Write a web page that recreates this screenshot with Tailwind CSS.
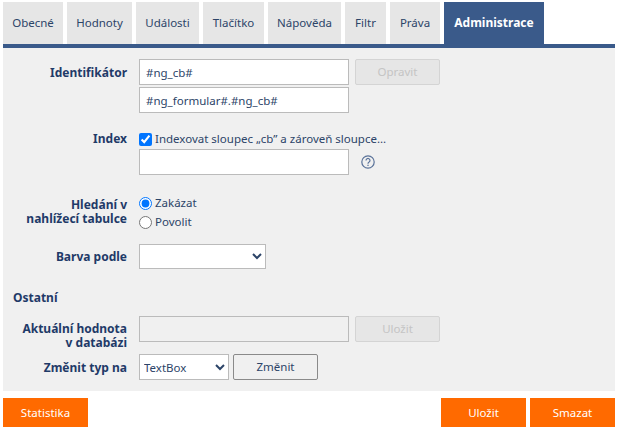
<!DOCTYPE html>
<html lang="cs">
  <head>
    <meta charset="UTF-8" />
    <title>Administrace</title>
    <script src="https://cdn.jsdelivr.net/npm/@tailwindcss/browser@4"></script>
  </head>
  <body class="w-[618px] h-[430px] overflow-hidden bg-white font-['Noto_Sans',sans-serif] text-[11.5px] leading-[18px] text-[#2c4468]">
    <!-- Tabs -->
    <nav class="flex gap-1 h-[42px] mt-[2px] mx-[3px]">
      <a class="w-[60px] flex items-center justify-center bg-[#e6e6e6]">Obecné</a>
      <a class="w-[65px] flex items-center justify-center bg-[#e6e6e6]">Hodnoty</a>
      <a class="w-[63px] flex items-center justify-center bg-[#e6e6e6]">Události</a>
      <a class="w-[61px] flex items-center justify-center bg-[#e6e6e6]">Tlačítko</a>
      <a class="w-[73px] flex items-center justify-center bg-[#e6e6e6]">Nápověda</a>
      <a class="w-[41px] flex items-center justify-center bg-[#e6e6e6]">Filtr</a>
      <a class="w-[50px] flex items-center justify-center bg-[#e6e6e6]">Práva</a>
      <a class="w-[100px] flex items-center justify-center bg-[#3a5a8a] text-white text-[12px] font-bold">Administrace</a>
    </nav>

    <!-- Form -->
    <section class="mx-[3px] h-[347px] border-t-4 border-[#3a5a8a] bg-[#f0f0f0] pt-[11px] pl-[10px]">
      <div class="flex">
        <label class="w-[114px] pt-[5px] text-right text-[12px] font-bold text-[#1f3a68]">Identifikátor</label>
        <div class="ml-[12px] flex flex-col gap-[2px]">
          <input value="#ng_cb#" class="w-[210px] h-[26px] px-[6px] bg-white border border-[#bbbbbb] text-[#2c4468]" />
          <input value="#ng_formular#.#ng_cb#" class="w-[210px] h-[26px] px-[6px] bg-white border border-[#bbbbbb] text-[#2c4468]" />
        </div>
        <button disabled class="ml-[6px] w-[85px] h-[26px] bg-[#e6e6e6] border border-[#d4d4d4] rounded-[2px] text-[#c4c4c4]">Opravit</button>
      </div>

      <div class="flex mt-[18px]">
        <label class="w-[114px] text-right text-[12px] font-bold leading-[16px] text-[#1f3a68]">Index</label>
        <div class="ml-[12px]">
          <label class="flex items-center h-[16px] gap-[3px]">
            <input type="checkbox" checked class="m-0 w-[13px] h-[13px]" />
            <span class="whitespace-nowrap">Indexovat sloupec „cb” a zároveň sloupce...</span>
          </label>
          <div class="flex items-center mt-[2px]">
            <input class="w-[210px] h-[26px] bg-white border border-[#bbbbbb]" />
            <svg class="ml-[12px]" width="14" height="14" viewBox="0 0 14 14" fill="none">
              <circle cx="7" cy="7" r="6.2" stroke="#5a7299" stroke-width="1.2" />
              <path d="M5 5.4a2 2 0 1 1 3.1 1.7c-.7.4-1.1.8-1.1 1.6" stroke="#5a7299" stroke-width="1.2" />
              <rect x="6.4" y="9.7" width="1.2" height="1.3" fill="#5a7299" />
            </svg>
          </div>
        </div>
      </div>

      <div class="flex mt-[20px]">
        <label class="w-[114px] text-right text-[12px] font-bold text-[#1f3a68] leading-[14px] pt-[3px]">Hledání v<br />nahlížecí tabulce</label>
        <div class="ml-[12px] flex flex-col gap-[3px]">
          <label class="flex items-center h-[16px] gap-[3px]"><input type="radio" name="hledani" checked class="m-0 w-[13px] h-[13px]" />Zakázat</label>
          <label class="flex items-center h-[16px] gap-[3px]"><input type="radio" name="hledani" class="m-0 w-[13px] h-[13px]" />Povolit</label>
        </div>
      </div>

      <div class="flex mt-[14px]">
        <label class="w-[114px] pt-[4px] text-right text-[12px] font-bold text-[#1f3a68]">Barva podle</label>
        <select class="ml-[12px] w-[127px] h-[25px] bg-white border border-[#bbbbbb]"><option></option></select>
      </div>

      <h3 class="mt-[20px] h-[18px] text-[12px] font-bold text-[#1f3a68]">Ostatní</h3>

      <div class="flex mt-[9px]">
        <label class="w-[114px] text-right text-[12px] font-bold text-[#1f3a68] leading-[14px] pt-[6px]">Aktuální hodnota<br />v databázi</label>
        <input disabled class="ml-[12px] w-[210px] h-[26px] bg-[#f0f0f0] border border-[#bbbbbb]" />
        <button disabled class="ml-[6px] w-[85px] h-[26px] bg-[#e6e6e6] border border-[#d4d4d4] rounded-[2px] text-[#c4c4c4]">Uložit</button>
      </div>

      <div class="flex mt-[4px]">
        <label class="w-[114px] pt-[5px] text-right text-[12px] font-bold text-[#1f3a68]">Změnit typ na</label>
        <select class="ml-[12px] w-[90px] h-[26px] bg-white border border-[#bbbbbb]"><option>TextBox</option></select>
        <button class="ml-[4px] w-[85px] h-[26px] bg-[#f0f0f0] border border-[#8a8a8a] rounded-[2px]">Změnit</button>
      </div>
    </section>

    <!-- Actions -->
    <footer class="flex gap-1 mx-[3px] mt-[7px]">
      <button class="w-[85px] h-[29px] bg-[#ff6a00] text-white">Statistika</button>
      <button class="w-[85px] h-[29px] ml-auto bg-[#ff6a00] text-white">Uložit</button>
      <button class="w-[85px] h-[29px] bg-[#ff6a00] text-white">Smazat</button>
    </footer>
  </body>
</html>
